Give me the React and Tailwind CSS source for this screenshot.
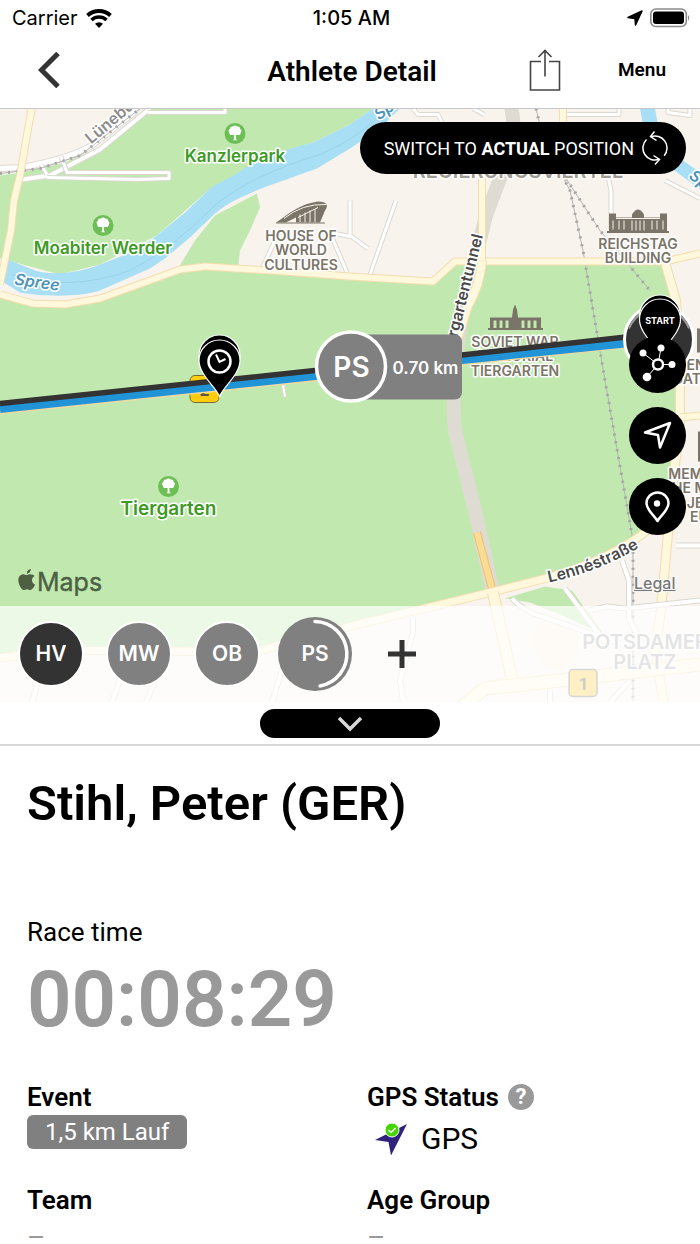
import { useState } from 'react';

const athletes = [
  { id: 'hv', initials: 'HV', color: 'bg-[#333333]' },
  { id: 'mw', initials: 'MW', color: 'bg-[#808080]' },
  { id: 'ob', initials: 'OB', color: 'bg-[#808080]' },
];

// Stroked twice so that the road gets a thin casing
const Road = ({ d, width = 8, color = '#fff8dc', casing = '#f5dcae' }) => (
  <g fill="none" strokeLinejoin="round">
    <path d={d} stroke={casing} strokeWidth={width + 2} />
    <path d={d} stroke={color} strokeWidth={width} />
  </g>
);

const Street = ({ d, width = 4 }) => <Road d={d} width={width} color="#ffffff" casing="#dcd8d2" />;

const Rail = ({ d }) => (
  <g fill="none">
    <path d={d} stroke="#b4b4b4" strokeWidth="1" />
    <path d={d} stroke="#a5a5a5" strokeWidth="3" strokeDasharray="2 6" />
  </g>
);

const Label = ({ x, y, lines, lineHeight = 14.5, className = 'text-[14px] fill-[#7b7468]', ...rest }) => (
  <text
    textAnchor="middle"
    stroke="#ffffff"
    strokeWidth="3"
    strokeLinejoin="round"
    paintOrder="stroke"
    className={`font-semibold ${className}`}
    {...rest}
  >
    {lines.map((line, i) => (
      <tspan key={line} x={x} y={y + i * lineHeight}>{line}</tspan>
    ))}
  </text>
);

const Park = ({ x, y, name, size = 'text-[17px]' }) => (
  <g>
    <circle cx={x} cy={y} r="10.5" fill="#6dbf55" />
    <path
      d={`M${x - 0.9} ${y + 1.5}h-2a2.3 2.3 0 0 1-2.8-2.6a2.3 2.3 0 0 1 .5-3.4a2.6 2.6 0 0 1 3-2.4a2.6 2.6 0 0 1 4.4 0a2.6 2.6 0 0 1 3 2.4a2.3 2.3 0 0 1 .5 3.4a2.3 2.3 0 0 1-2.8 2.6h-2l.2 4.2l1.6 1h-5l1.4-1z`}
      fill="#ffffff"
    />
    <Label x={x} y={y + 28} lines={[name]} className={`fill-[#3d9a25] ${size}`} />
  </g>
);

const Pin = ({ x, y, children }) => (
  <g transform={`translate(${x} ${y})`}>
    <path d="M0 36C-4 26-20.500 14-20.500 0a20.500 20.500 0 0 1 41 0C20.500 14 4 26 0 36z" fill="#000" stroke="#fff" strokeWidth="1.200" />
    {children}
  </g>
);

const RaceMap = () => (
  <svg
    viewBox="0 108 700 594"
    preserveAspectRatio="xMidYMid slice"
    className="absolute inset-0 w-full h-full font-[Inter,sans-serif]"
    role="img"
    aria-label="Race map"
  >
    <rect y="100" width="700" height="610" fill="#f8f4ed" />

    {/* Parks */}
    <g fill="#c1e9af">
      <path d="M0 175L22 172L62 163L100 147L148 108H373L350 124L313 142L270 155L208 190L157 235L100 264L60 274L0 258z" />
      <path d="M0 294L33 303L65 304L100 298L180 269L205 266L433 281L455 261L665 260L677 300L680 400L672 500L635 545L545 577L350 626L250 653L80 650L0 657z" />
      <path d="M178 268L195 240L215 215L257 193L260 207L250 230L240 250L238 268z" />
      <path d="M505 598L545 586L572 590L604 634L560 614L530 602z" />
    </g>
    <path d="M530 640Q535 618 560 622Q585 625 578 650L560 670Q540 668 530 640z" fill="#fbf1e0" />

    {/* River */}
    <g fill="#a9dff4">
      <path d="M373 108L350 124L313 142C290 148 262 155 237 173C225 180 214 184 208 190L185 212L157 235C135 252 115 258 100 264C80 272 50 277 30 268L5 258L2 281L20 292C40 296 80 297 100 290L150 268L165 258L190 237L215 213C230 200 255 190 275 183L317 168L350 148L380 128L400 108z" />
      <path d="M640 108L655 108L658 125Q665 150 683 160L700 172L700 189L672 168Q648 150 643 125z" />
    </g>
    <path d="M386 108Q360 138 320 154Q250 175 215 205Q170 250 130 270Q70 292 12 274" fill="none" stroke="#98d3ec" />

    {/* Tunnel */}
    <g fill="none" stroke="#dedbd3" strokeWidth="14" strokeLinejoin="round">
      <path d="M510 100C516 130 515 140 505 165L486 215L465 300Q450 380 455 430L475 510L493 592" />
    </g>

    {/* Side streets */}
    <Street d="M0 168L22 167Q70 158 92 145L134 112L142 100" width={5} />
    <Street d="M22 179L50 175L100 149L150 108" />
    <Street d="M41 164L47 174M61 156L67 172H169V178L138 179L47 177" width={3} />
    <Street d="M148 112H225V104" width={3} />
    <Street d="M276 238L262 268M330 232L347 272M330 232L350 236M350 200V235L368 248M396 200L370 274" width={3} />
    <Street d="M413 108L418 114H438L445 128M473 108L484 114M565 114H619V106M668 108V112L690 115V108" width={3} />
    <Street d="M462 169H480M608 176L611 190V230M665 180L700 198" width={3} />
    <Street d="M283 385L285 396" width={2} />
    <Rail d="M0 173L40 168L80 155L140 108M536 108L540 125M562 175L570 190L583 250L605 380L633 540V700M566 178L600 230L650 290" />

    {/* Main roads */}
    <Road d="M33 100L20 175L14 200L11 230L0 284" width={6} />
    <Road d="M0 294L33 303L65 304L100 298L150 280L180 269L205 266L270 270L350 276L433 281L455 261H665L700 253" width={6} />
    <Road d="M563 108V127M482 260V169H644V173" width={6} />
    <Road d="M482 260Q480 285 468 305L455 345" width={8} />
    <Road d="M665 262L676 300L680 360V420L671 500L661 610L655 650L665 710" width={8} />
    <Road d="M680 417L700 415" width={6} />
    <Road d="M477 532L493 592" width={6} color="#fbdc93" casing="#f3be74" />
    <Road d="M0 657L80 650H150L250 653L350 626L490 592L545 578Q610 560 650 528" width={7} />
    <Road d="M493 592L508 660L514 688" width={10} />
    <Road d="M460 708L485 688L560 680L700 664" width={12} />
    <Street d="M512 598Q525 612 545 617L640 650M565 588L605 642M589 610L607 606L625 608L700 600M622 560L629 580V618L645 650" />
    <Street d="M42 668L32 702M124 668L112 702M160 668L146 702M285 660L272 702M413 617V632L400 680L403 700M550 690V702M630 680L610 702M676 545H700" />

    {/* Landmarks */}
    <g fill="#7b7468" stroke="none">
      <path d="M276 222C288 214 300 203 318 201C327 201 329 205 325 210L320 222H296V217L286 222z" />
      <path d="M284 218Q302 203 326 204M298 217L318 207M300 222V214M305 222V212M310 222V210M315 222V209" fill="none" stroke="#f8f4ed" />
      <path d="M276 222.500H325" stroke="#7b7468" />
      <path d="M609 213H616V217H632V214Q638 204 644 214V217H660V213H667V231H609z" />
      <path d="M613 220V229M619 220V229M624 220V229M632 220V230M636 220V230M640 220V230M644 220V230M652 220V229M657 220V229M663 220V229M616 218H660" stroke="#f8f4ed" />
      <path d="M607 231.500H669" stroke="#7b7468" strokeWidth="2" />
      <path d="M490 317H512L513 309L515 304L517 309L518 317H541V328H490z" />
      <path d="M495 320V328M501 320V328M507 320V328M523 320V328M529 320V328M535 320V328" stroke="#c1e9af" strokeWidth="3" />
      <path d="M488 328.500H543" stroke="#7b7468" strokeWidth="2" />
      <path d="M697 328H700V352H697zM698 431H700V461H698z" />
    </g>

    <Label x={301} y={240} lines={['HOUSE OF', 'WORLD', 'CULTURES']} />
    <Label x={638} y={248} lines={['REICHSTAG', 'BUILDING']} />
    <Label x={515} y={346} lines={['SOVIET WAR', 'MEMORIAL', 'TIERGARTEN']} />
    <Label x={691} y={369} lines={['BRANDENBURG', 'GATE']} />
    <Label x={718} y={478} lines={['MEMORIAL TO', 'THE MURDERED', 'JEWS OF', 'EUROPE']} />
    <Label x={518} y={177} lines={['REGIERUNGSVIERTEL']} className="text-[20px] fill-[#a09b93]" />
    <Label x={645} y={648} lines={['POTSDAMER', 'PLATZ']} lineHeight={20} className="text-[20px] fill-[#a5a5a5]" />
    <Label x={0} y={0} lines={['Lüneburger Straße']} textAnchor="start" transform="translate(91 144) rotate(-40)" className="text-[16px] fill-[#8c8c8c]" />
    <Label x={0} y={0} lines={['Tiergartentunnel']} textAnchor="end" transform="translate(483 235) rotate(-76)" className="text-[16px] fill-[#4a4a4a]" />
    <Label x={0} y={0} lines={['Spree']} textAnchor="start" transform="translate(14 284) rotate(8)" className="text-[16px] italic fill-[#4b93b8]" />
    <Label x={0} y={0} lines={['Spree']} textAnchor="start" transform="translate(379 120) rotate(-36)" className="text-[16px] italic fill-[#4b93b8]" />
    <Label x={0} y={0} lines={['Spree']} textAnchor="start" transform="translate(688 177) rotate(38)" className="text-[16px] italic fill-[#4b93b8]" />
    <path id="lenne" d="M549 582Q605 570 650 540" fill="none" />
    <text className="text-[16px] font-semibold fill-[#4a4a4a]" stroke="#fff" strokeWidth="3" paintOrder="stroke">
      <textPath href="#lenne">Lennéstraße</textPath>
    </text>

    <Park x={235} y={133} name="Kanzlerpark" />
    <Park x={103} y={225} name="Moabiter Werder" />
    <Park x={168.500} y={486} name="Tiergarten" size="text-[19px]" />

    {/* Road shields */}
    <g className="text-[16px] font-bold fill-[#555555]" textAnchor="middle">
      <rect x="190" y="375" width="29" height="27" rx="5" fill="#ffcd0a" stroke="#7a6a3a" />
      <text x="204.500" y="395">2</text>
      <rect x="569" y="669" width="28" height="27" rx="4" fill="#fccb3a" stroke="#777777" strokeWidth="1.500" />
      <text x="583" y="689">1</text>
    </g>

    {/* Route */}
    <g fill="none">
      <path d="M0 413L315 380L462 364L623 347" stroke="#f3d9a0" strokeWidth="2" />
      <path d="M0 408L315 375L462 359L640 341" stroke="#2194d8" strokeWidth="9" />
      <path d="M0 403L315 370L462 354.500L640 335" stroke="#333333" strokeWidth="5.500" />
    </g>

    <Pin x={219.500} y={355} />
    <Pin x={219.500} y={360}>
      <circle r="11" cy="1" fill="none" stroke="#fff" strokeWidth="2.500" />
      <path d="M-3.500-6L0 1.500L6-1.500" fill="none" stroke="#fff" strokeWidth="2" />
    </Pin>

    {/* Current athlete */}
    <rect x="345" y="334" width="117" height="65" rx="7" fill="#808080" />
    <circle cx="351" cy="366" r="34.500" fill="#808080" stroke="#fff" strokeWidth="3.500" />
    <text x="351.500" y="376" textAnchor="middle" className="text-[28px] font-semibold fill-white">PS</text>
    <text x="425.500" y="373" textAnchor="middle" className="text-[17px] font-semibold fill-white">0.70 km</text>

    {/* Start */}
    <circle cx="659" cy="339" r="34.500" fill="#333333" stroke="#fff" strokeWidth="3" />
    <path d="M629 328A32 32 0 0 1 645 311M674 311A32 32 0 0 1 689 328" fill="none" stroke="#999999" strokeWidth="2" />
    <Pin x={660} y={315} />
    <Pin x={660} y={319}>
      <text y="4" textAnchor="middle" className="text-[9px] font-bold fill-white">START</text>
    </Pin>

    {/* Map provider */}
    <path
      d="M31 574C29 573 27.500 574.500 26.500 574.500S23.500 573 22 574C19 575 18 578 18.500 581C19 585 21.500 589 23.500 589.500C25 589.500 25.500 588.700 27 588.700S29 589.700 30.500 589.500C32.500 589 34.500 586 35 584C33 583 32 581.500 32 579.500C32 577.500 33 576.500 34.500 575.500C33.500 574.300 32.500 574 31 574zM26.800 573C26.600 570.500 28.500 568.800 30.800 568.500C31 571 29 573 26.800 573z"
      fill="#4d6044"
    />
    <text x="37" y="590" className="text-[25px] fill-[#4d6044]" stroke="#4d6044" strokeWidth=".4">Maps</text>
    <a href="#legal">
      <text x="634" y="588" className="text-[16px] font-medium underline fill-[#777777]" stroke="#ffffff" strokeWidth="2" paintOrder="stroke">Legal</text>
    </a>
  </svg>
);

const StatusBar = () => (
  <div className="grid grid-cols-3 items-center h-9 pl-3 pr-[9px] font-[Inter,sans-serif] text-[20px]">
    <div className="flex items-center gap-2">
      <span>Carrier</span>
      <svg width="26" height="19" viewBox="0 0 26 19">
        <path d="M1.500 6.500a17 17 0 0 1 23 0" fill="none" stroke="#000" strokeWidth="4" />
        <path d="M5.500 11a11 11 0 0 1 15 0" fill="none" stroke="#000" strokeWidth="3.500" />
        <path d="M9 14.800a6 6 0 0 1 8 0L13 19z" />
      </svg>
    </div>
    <span className="text-center font-medium">1:05 AM</span>
    <div className="flex items-center justify-end gap-[7px]">
      <svg width="16" height="16" viewBox="0 0 16 16"><path d="M15 1L8.500 15L8 8.500L1 7.500z" stroke="#000" strokeWidth="1.500" strokeLinejoin="round" /></svg>
      <svg width="41" height="20" viewBox="0 0 41 20">
        <rect x=".8" y="1" width="35.500" height="17.500" rx="5" fill="none" stroke="#8c8c8c" strokeWidth="1.600" />
        <rect x="3" y="3.500" width="31" height="12.500" rx="3" />
        <path d="M38 7q2.500 2.500 0 6z" fill="#8c8c8c" />
      </svg>
    </div>
  </div>
);

const NavBar = () => (
  <div className="grid grid-cols-[1fr_auto_1fr] items-center h-[72px] pl-[38px] pr-[34px] pb-1">
    <button aria-label="Back" className="w-[22px]">
      <svg width="22" height="36" viewBox="0 0 22 36"><path d="M20 1.500L3.500 18L20 34.500" fill="none" stroke="#333333" strokeWidth="5" /></svg>
    </button>
    <h1 className="pt-1 text-[28px] font-semibold">Athlete Detail</h1>
    <div className="flex items-center justify-end gap-[57px]">
      <button aria-label="Share">
        <svg width="32" height="42" viewBox="0 0 32 42" fill="none" stroke="#444444" strokeWidth="1.600">
          <path d="M12 12.500H1.500V41H30.500V12.500H20M16 27.500V1.500M9.500 8L16 1.500L22.500 8" />
        </svg>
      </button>
      <button className="text-[19px] font-semibold">Menu</button>
    </div>
  </div>
);

const RoundButton = ({ label, children }) => (
  <button aria-label={label} className="flex items-center justify-center size-[57px] rounded-full bg-black">
    <svg width="57" height="57" viewBox="0 0 57 57" fill="none" stroke="#fff" strokeLinejoin="round">{children}</svg>
  </button>
);

const Field = ({ label, extra, children }) => (
  <div className="flex flex-col items-start h-[103px]">
    <dt className="flex items-center gap-[9px] h-8 text-[26px] font-semibold">{label}{extra}</dt>
    <dd className="text-2xl">{children}</dd>
  </div>
);

const App = () => {
  const [open, setOpen] = useState(true);

  return (
    <div className="min-h-screen bg-white text-black font-[Roboto,sans-serif]">
      <header className="border-b border-[#c8c8c8]">
        <StatusBar />
        <NavBar />
      </header>

      <section className="relative flex flex-col justify-between aspect-[700/593] overflow-hidden">
        <RaceMap />
        <div className="relative flex flex-col items-end pt-[13px] pr-3.5">
          <button className="flex items-center gap-2 h-[52px] px-[18px] pl-6 rounded-full bg-black text-white text-[18px]">
            <span>SWITCH TO <b>ACTUAL</b> POSITION</span>
            <svg width="26" height="36" viewBox="0 0 26 36" fill="none" stroke="#fff" strokeWidth="1.500">
              <path d="M8.900 6.700A12 12 0 0 1 22.200 25.700M4.500 9.500A12 12 0 0 0 17.100 29.300" />
              <path d="M12.500 1.500L8.500 6.500L14.500 10.500M11.500 25.500L17.500 29.500L13 34.500" />
            </svg>
          </button>
          <div className="flex flex-col gap-3.5 mt-[162px]">
            <RoundButton label="Tracking network">
              <path d="M29 28.500L14 17M29 28.500L32 12M29 28.500L43 28.500M29 28.500L18 41" strokeWidth="1" />
              <circle cx="29" cy="28.500" r="5" fill="#000" strokeWidth="2.500" />
              <g fill="#fff" stroke="none">
                <circle cx="14" cy="17" r="3.500" /><circle cx="32" cy="12" r="3.500" />
                <circle cx="43" cy="28.500" r="3.500" /><circle cx="18" cy="41" r="4.300" />
              </g>
            </RoundButton>
            <RoundButton label="My location">
              <path d="M41 16L16 25.500L29 28L31 40.500z" strokeWidth="2.500" />
            </RoundButton>
            <RoundButton label="Places">
              <path d="M28.500 43C25 37 17.500 32 17.500 25.500a11 11 0 0 1 22 0C39.500 32 32 37 28.500 43z" strokeWidth="2.500" />
              <circle cx="28" cy="25.500" r="3.200" fill="#fff" stroke="none" />
            </RoundButton>
          </div>
        </div>

        <div className="relative flex items-center gap-[22px] h-24 pl-[18px] bg-white/70 font-[Inter,sans-serif] text-[21px] font-semibold text-white">
          {athletes.map((athlete) => (
            <button key={athlete.id} className={`size-[66px] rounded-full border-2 border-white ${athlete.color}`}>
              {athlete.initials}
            </button>
          ))}
          <button className="relative size-[74px] -mx-1 rounded-full bg-[#808080]">
            PS
            <svg viewBox="0 0 74 74" className="absolute inset-0">
              <path d="M37 4.500A32.500 32.500 0 0 1 42 69" fill="none" stroke="#fff" strokeWidth="3.500" strokeLinecap="round" />
            </svg>
          </button>
          <button aria-label="Add athlete" className="flex justify-center w-16">
            <svg width="28" height="28" viewBox="0 0 28 28"><path d="M14 0V28M0 14H28" stroke="#333333" strokeWidth="5" /></svg>
          </button>
        </div>
      </section>

      <div className="flex items-start justify-center h-11 pt-[7px] border-b-2 border-[#d8d8d8]">
        <button
          aria-label="Toggle details"
          aria-expanded={open}
          onClick={() => setOpen(!open)}
          className="flex items-center justify-center w-[180px] h-[29px] rounded-full bg-black"
        >
          <svg width="26" height="16" viewBox="0 0 26 16"><path d="M2 2L13 13L24 2" fill="none" stroke="#d8d8d8" strokeWidth="3.500" /></svg>
        </button>
      </div>

      {open && (
        <main className="px-[27px] pt-7">
          <h2 className="text-[49px] leading-[60px] font-semibold">Stihl, Peter (GER)</h2>
          <p className="mt-20 text-[26px] leading-9">Race time</p>
          <p className="text-[78px] leading-[100px] font-semibold text-[#999999]">00:08:29</p>
          <dl className="grid grid-cols-2 gap-x-[34px] mt-[31px]">
            <Field label="Event">
              <span className="flex items-center h-[34px] mt-0.5 px-[18px] rounded-md bg-[#808080] text-white">1,5 km Lauf</span>
            </Field>
            <Field
              label="GPS Status"
              extra={
                <button aria-label="GPS status help" className="size-[26px] rounded-full bg-[#999999] text-white text-[22px] leading-[26px] font-bold">?</button>
              }
            >
              <span className="flex items-center gap-[14px] pl-2 pt-1.5 text-[30px]">
                <svg width="32" height="34" viewBox="0 0 32 34">
                  <path d="M32 2L16 33.500L13.500 20L0 18z" fill="#31217e" />
                  <circle cx="17" cy="8" r="7" fill="#44d600" stroke="#fff" />
                  <path d="M13.500 8L16 10.500L20.500 6" fill="none" stroke="#fff" strokeWidth="1.500" />
                </svg>
                GPS
              </span>
            </Field>
          </dl>
          <dl className="grid grid-cols-2 gap-x-[34px]">
            <div>
              <dt className="h-8 text-[26px] leading-8 font-semibold">Team</dt>
              <dd className="mt-2 text-[28px] leading-7 text-[#999999]">–</dd>
            </div>
            <div>
              <dt className="h-8 text-[26px] leading-8 font-semibold">Age Group</dt>
              <dd className="mt-2 text-[28px] leading-7 text-[#999999]">–</dd>
            </div>
          </dl>
        </main>
      )}
    </div>
  );
};

export default App;
